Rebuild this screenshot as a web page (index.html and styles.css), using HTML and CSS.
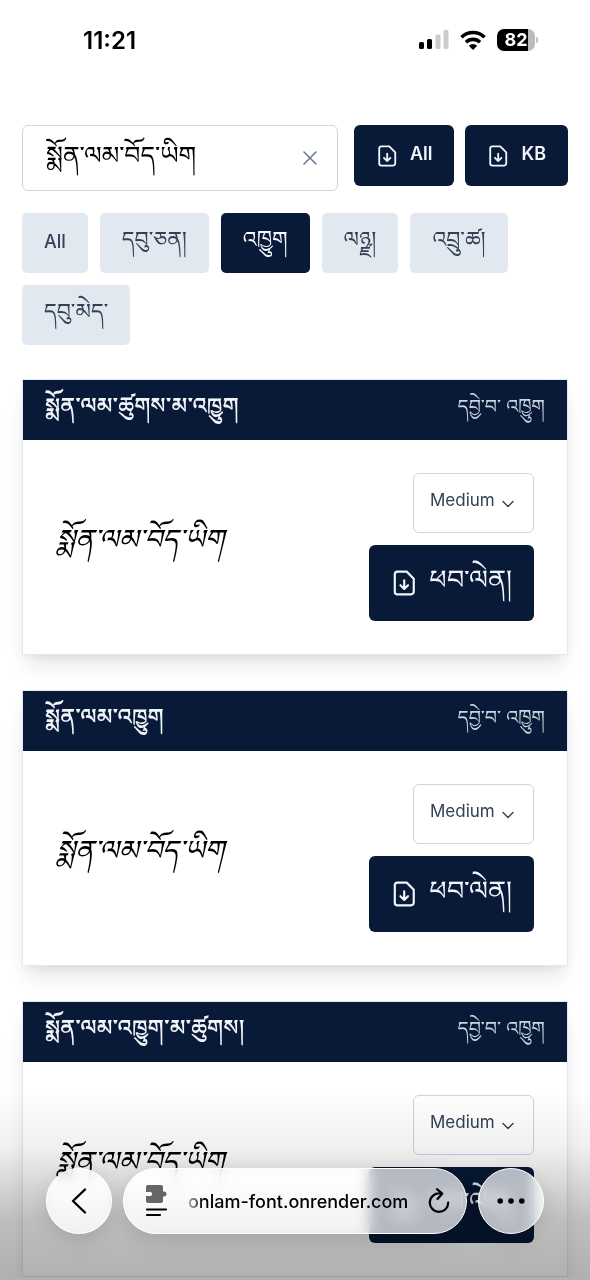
FILE: index.html
```html
<!DOCTYPE html>
<html lang="bo">
  <head>
    <meta charset="UTF-8" />
    <meta name="viewport" content="width=device-width, initial-scale=1.0" />
    <title>Monlam Font</title>
    <link rel="stylesheet" href="styles.css">
  </head>
  <body>
    <!-- icons -->
    <svg class="sprite" aria-hidden="true">
      <symbol id="i-file" viewBox="0 0 24 24">
        <path d="M6 1.500h8.500L21 8v12a2.500 2.500 0 0 1-2.500 2.500H6A2.500 2.500 0 0 1 3.500 20V4A2.500 2.500 0 0 1 6 1.500zM12.200 9.500v8M8.700 14l3.500 3.500 3.500-3.500" fill="none" stroke="currentColor" stroke-width="2" stroke-linecap="round" stroke-linejoin="round" />
      </symbol>
      <symbol id="i-down" viewBox="0 0 12 8">
        <path d="M1 1.500l5 5 5-5" fill="none" stroke="currentColor" stroke-width="1.400" stroke-linecap="round" stroke-linejoin="round" />
      </symbol>
    </svg>

    <!-- status bar -->
    <header class="status">
      <time>11:21</time>
      <div class="status-icons">
        <svg width="30" height="20" viewBox="0 0 30 20" aria-hidden="true">
          <rect x="0" y="12" width="5" height="7" rx="1.500" />
          <rect x="8" y="9" width="5" height="10" rx="1.500" />
          <rect x="16.500" y="4.500" width="5" height="14.500" rx="1.500" fill="#ccc" />
          <rect x="24.500" y="0" width="5" height="19" rx="1.500" fill="#ccc" />
        </svg>
        <svg width="26" height="20" viewBox="0 0 26 20" aria-hidden="true">
          <path d="M1.500 7.200a16.500 16.500 0 0 1 23 0M6 12.200a10 10 0 0 1 14 0" fill="none" stroke="#000" stroke-width="3.600" />
          <path d="M8.800 15.700a6.200 6.200 0 0 1 8.400 0L13 20z" />
        </svg>
        <div class="battery">82</div>
      </div>
    </header>

    <main>
      <form class="search">
        <div class="search-box">
          <input type="text" aria-label="Preview text" value="སྨོན་ལམ་བོད་ཡིག">
          <button type="button" class="clear" aria-label="Clear">
            <svg width="14" height="14" viewBox="0 0 14 14" aria-hidden="true"><path d="M1 1l12 12M13 1L1 13" stroke="currentColor" stroke-width="1.500" stroke-linecap="round" /></svg>
          </button>
        </div>
        <button type="button" class="btn"><svg class="ico" aria-hidden="true"><use href="#i-file" /></svg>All</button>
        <button type="button" class="btn"><svg class="ico" aria-hidden="true"><use href="#i-file" /></svg>KB</button>
      </form>

      <!-- filters -->
      <div class="filters">
        <button type="button" class="chip en">All</button>
        <button type="button" class="chip">དབུ་ཅན།</button>
        <button type="button" class="chip on">འཁྱུག</button>
        <button type="button" class="chip">ལཉྫ།</button>
        <button type="button" class="chip">འབྲུ་ཚ།</button>
        <button type="button" class="chip">དབུ་མེད་</button>
      </div>

      <!-- font list -->
      <section class="cards">
        <article class="card">
          <div class="card-head">
            <h2>སྨོན་ལམ་ཚུགས་མ་འཁྱུག</h2>
            <span>དབྱེ་བ་ འཁྱུག</span>
          </div>
          <div class="card-body">
            <p class="sample">སྨོན་ལམ་བོད་ཡིག</p>
            <div class="actions">
              <div class="weight">
                <select aria-label="Weight"><option>Medium</option></select>
                <svg width="12" height="8" aria-hidden="true"><use href="#i-down" /></svg>
              </div>
              <button type="button" class="btn get"><svg class="ico" aria-hidden="true"><use href="#i-file" /></svg>ཕབ་ལེན།</button>
            </div>
          </div>
        </article>

        <article class="card">
          <div class="card-head">
            <h2>སྨོན་ལམ་འཁྱུག</h2>
            <span>དབྱེ་བ་ འཁྱུག</span>
          </div>
          <div class="card-body">
            <p class="sample">སྨོན་ལམ་བོད་ཡིག</p>
            <div class="actions">
              <div class="weight">
                <select aria-label="Weight"><option>Medium</option></select>
                <svg width="12" height="8" aria-hidden="true"><use href="#i-down" /></svg>
              </div>
              <button type="button" class="btn get"><svg class="ico" aria-hidden="true"><use href="#i-file" /></svg>ཕབ་ལེན།</button>
            </div>
          </div>
        </article>

        <article class="card">
          <div class="card-head">
            <h2>སྨོན་ལམ་འཁྱུག་མ་ཚུགས།</h2>
            <span>དབྱེ་བ་ འཁྱུག</span>
          </div>
          <div class="card-body">
            <p class="sample">སྨོན་ལམ་བོད་ཡིག</p>
            <div class="actions">
              <div class="weight">
                <select aria-label="Weight"><option>Medium</option></select>
                <svg width="12" height="8" aria-hidden="true"><use href="#i-down" /></svg>
              </div>
              <button type="button" class="btn get"><svg class="ico" aria-hidden="true"><use href="#i-file" /></svg>ཕབ་ལེན།</button>
            </div>
          </div>
        </article>
      </section>
    </main>

    <!-- browser toolbar, floats over the page -->
    <div class="shade"></div>
    <nav class="toolbar">
      <button type="button" class="glass round" aria-label="Back">
        <svg width="16" height="26" viewBox="0 0 16 26" aria-hidden="true"><path d="M14 1.500L2 13l12 11.500" fill="none" stroke="#000" stroke-width="2.400" stroke-linecap="round" stroke-linejoin="round" /></svg>
      </button>
      <div class="glass address">
        <button type="button" aria-label="Page menu">
          <svg width="22" height="32" viewBox="0 0 22 32" aria-hidden="true">
            <path d="M2 0h13a2 2 0 0 1 2 2v4.500h1a2.500 2.500 0 1 1 0 5h-1V16a2 2 0 0 1-2 2H2a2 2 0 0 1-2-2v-5h3a2.200 2.200 0 1 0 0-4H0V2a2 2 0 0 1 2-2z" fill="#666" />
            <path d="M1 24.500h19M1 30h13" stroke="#000" stroke-width="2.200" stroke-linecap="round" />
          </svg>
        </button>
        <a href="#">onlam-font.onrender.com</a>
        <button type="button" aria-label="Reload">
          <svg width="22" height="26" viewBox="0 0 22 26" aria-hidden="true"><path d="M12 5.500A9.200 9.200 0 1 0 20.200 14.500M9 1.200l5.200 4.500L9.500 11" fill="none" stroke="#000" stroke-width="2.200" stroke-linecap="round" stroke-linejoin="round" /></svg>
        </button>
      </div>
      <button type="button" class="glass round" aria-label="More">
        <svg width="28" height="6" viewBox="0 0 28 6" aria-hidden="true"><circle cx="3.200" cy="3" r="2.800" /><circle cx="14" cy="3" r="2.800" /><circle cx="24.800" cy="3" r="2.800" /></svg>
      </button>
    </nav>
  </body>
</html>
```
FILE: styles.css
```css
* {
  box-sizing: border-box;
}

html,
body,
h2,
p {
  margin: 0;
  padding: 0;
}

body {
  background-color: #fff;
  color: #000;
  font-family: Inter, "Noto Serif Tibetan", "Noto Sans Tibetan", sans-serif;
  font-size: 18px;
}

button,
input,
select {
  font: inherit;
  color: inherit;
  margin: 0;
}

button {
  display: flex;
  align-items: center;
  justify-content: center;
  border: 0;
  background: none;
  padding: 0;
  white-space: nowrap;
}

.sprite {
  display: none;
}

/* status bar */
.status {
  display: flex;
  justify-content: space-between;
  align-items: center;
  height: 80px;
  padding: 0 55px 0 83px;
}

.status time {
  font-size: 24px;
  font-weight: 600;
}

.status-icons {
  display: flex;
  align-items: center;
  gap: 11px;
}

.battery {
  position: relative;
  width: 38px;
  height: 22px;
  border-radius: 7px;
  background: linear-gradient(90deg, #000 82%, #bbb 82%);
  color: #fff;
  font-size: 18px;
  font-weight: 700;
  line-height: 22px;
  text-align: center;
}

/* battery tip */
.battery::after {
  content: '';
  position: absolute;
  left: 39px;
  top: 8px;
  width: 2px;
  height: 6px;
  border-radius: 0 2px 2px 0;
  background-color: #bbb;
}

main {
  padding: 45px 22px 0;
}

/* search row */
.search {
  display: flex;
  align-items: flex-start;
  gap: 11px;
}

.search-box {
  display: flex;
  flex: 1;
  min-width: 0;
  height: 66px;
  margin-right: 5px;
  border: 1px solid #cbd5e1;
  border-radius: 6px;
}

.search-box input {
  flex: 1;
  min-width: 0;
  padding: 8px 0 0 23px;
  border: 0;
  background: none;
  outline: 0;
  font-size: 25px;
}

.clear {
  width: 54px;
  color: #64748b;
}

.btn {
  gap: 12px;
  height: 61px;
  padding: 0 22px 4px;
  border-radius: 6px;
  background-color: #081a38;
  color: #f1f5f9;
  font-weight: 600;
}

.ico {
  width: 22px;
  height: 22px;
  margin-top: 4px;
}

/* filters */
.filters {
  display: flex;
  flex-wrap: wrap;
  gap: 12px;
  margin-top: 22px;
}

.chip {
  height: 60px;
  padding: 6px 22px 0;
  border-radius: 5px;
  background-color: #e2e8f0;
  color: #334155;
  font-size: 22px;
}

.chip.en {
  padding: 0 22px 4px;
  font-size: 18px;
  font-weight: 500;
}

.chip.on {
  background-color: #081a38;
  color: #f8fafc;
}

/* cards */
.cards {
  display: grid;
  gap: 35px;
  margin-top: 34px;
}

.card {
  border: 1px solid #e2e8f0;
  background-color: #fff;
  box-shadow: 0 14px 20px -4px rgba(0, 0, 0, 0.1), 0 4px 10px -4px rgba(0, 0, 0, 0.08);
}

.card-head {
  display: flex;
  justify-content: space-between;
  align-items: center;
  height: 60px;
  padding: 4px 22px 0;
  background-color: #081a38;
  color: #f1f5f9;
}

.card-head h2 {
  font-size: 22px;
  font-weight: 600;
}

.card-head span {
  font-size: 19px;
  color: #cbd5e1;
}

.card-body {
  display: flex;
  justify-content: space-between;
  align-items: center;
  padding: 33px;
}

.sample {
  font-size: 28px;
  font-style: italic;
}

.actions {
  display: flex;
  flex-direction: column;
  align-items: flex-end;
  gap: 12px;
}

.weight {
  position: relative;
}

.weight select {
  appearance: none;
  display: block;
  width: 121px;
  height: 60px;
  padding: 0 32px 6px 16px;
  border: 1px solid #cbd5e1;
  border-radius: 6px;
  background: none;
  color: #334155;
  font-size: 17px;
}

.weight svg {
  position: absolute;
  right: 20px;
  top: 27px;
  color: #334155;
  pointer-events: none;
}

.get {
  height: 76px;
  padding: 8px 22px 0;
  font-size: 27px;
  font-weight: 400;
}

.get .ico {
  width: 26px;
  height: 26px;
  margin: 0 0 8px;
}

/* toolbar */
.shade {
  position: fixed;
  left: 0;
  right: 0;
  bottom: 0;
  height: 190px;
  background: linear-gradient(rgba(0, 0, 0, 0), rgba(0, 0, 0, 0.06) 30%, rgba(0, 0, 0, 0.25) 68%, rgba(0, 0, 0, 0.31));
  pointer-events: none;
}

.toolbar {
  position: fixed;
  left: 0;
  right: 0;
  bottom: 46px;
  display: flex;
  gap: 11px;
  padding: 0 46px;
}

.glass {
  height: 66px;
  border: 1px solid #fff;
  border-radius: 33px;
  background-color: rgba(255, 255, 255, 0.7);
  backdrop-filter: blur(7px) brightness(1.15);
  box-shadow: 0 6px 20px rgba(0, 0, 0, 0.12);
}

.round {
  flex: none;
  width: 66px;
}

.address {
  display: flex;
  flex: 1;
  min-width: 0;
  align-items: center;
  gap: 20px;
  padding: 0 18px 0 22px;
}

.address a {
  flex: 1;
  color: #000;
  font-size: 18px;
  font-weight: 500;
  text-decoration: none;
  white-space: nowrap;
  /* the start of the host fades out */
  -webkit-mask-image: linear-gradient(90deg, rgba(0, 0, 0, 0.3), #000 16px);
  mask-image: linear-gradient(90deg, rgba(0, 0, 0, 0.3), #000 16px);
}
```
